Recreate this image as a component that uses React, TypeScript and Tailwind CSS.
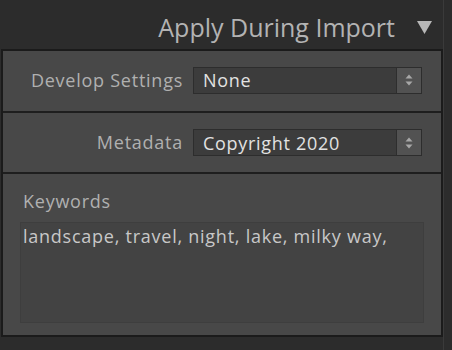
import React from "react";

const font = { fontFamily: '"Open Sans", "Noto Sans", sans-serif' };

function Spinner() {
  return (
    <div className="flex h-full w-[25px] items-center justify-center border-l border-[#2e2e2e] bg-[#525252]">
      <svg width="10" height="14" viewBox="0 0 10 14">
        <path d="M5 1.5 L8.5 5.5 H1.5 Z" fill="#a8a8a8" />
        <path d="M5 12.5 L8.5 8.5 H1.5 Z" fill="#a8a8a8" />
      </svg>
    </div>
  );
}

function Select({ value }: { value: string }) {
  return (
    <div className="flex h-[27px] w-[229px] items-center border border-[#2d2d2d] bg-[#3c3c3c]">
      <div className="flex-1 pl-[9px] text-[18px] leading-none tracking-[0.7px] text-[#e2e2e2]">{value}</div>
      <Spinner />
    </div>
  );
}

export default function App() {
  return (
    <div className="relative h-[350px] w-[452px] overflow-hidden bg-[#2c2c2c]" style={font}>
      <div className="flex h-[49px] items-center justify-end pr-[20px] pt-[5px]">
        <span className="text-[25px] leading-none text-[#b3b3b3]">Apply During Import</span>
        <svg className="ml-[22px]" width="15" height="13" viewBox="0 0 15 13">
          <path d="M0 0 H15 L7.5 13 Z" fill="#b8b8b8" />
        </svg>
      </div>
      <div className="ml-[1px] w-[442px] border-2 border-[#1b1b1b] bg-[#484848]">
        <div className="flex h-[62px] items-center border-b-2 border-[#1e1e1e] pb-[2px]">
          <div className="w-[190px] pr-[10px] text-right text-[18px] tracking-[0.75px] text-[#b0b0b0]">Develop Settings</div>
          <Select value="None" />
        </div>
        <div className="flex h-[61px] items-center border-b-2 border-[#1e1e1e]">
          <div className="w-[190px] pr-[10px] text-right text-[18px] tracking-[0.75px] text-[#b0b0b0]">Metadata</div>
          <Select value="Copyright 2020" />
        </div>
        <div className="h-[161px] px-[17px] pt-[15px]">
          <div className="pl-[3px] text-[18px] leading-[24px] tracking-[0.75px] text-[#b0b0b0]">Keywords</div>
          <div className="mt-[9px] h-[101px] border border-[#3e3e3e] bg-[#434343] px-[2px] pt-[1px] text-[18px] leading-[24px] tracking-[0.75px] text-[#c8c8c8]">
            landscape, travel, night, lake, milky way,
          </div>
        </div>
      </div>
      <div className="absolute right-[8px] top-0 h-full w-px bg-[#3a3a3a]" />
    </div>
  );
}
